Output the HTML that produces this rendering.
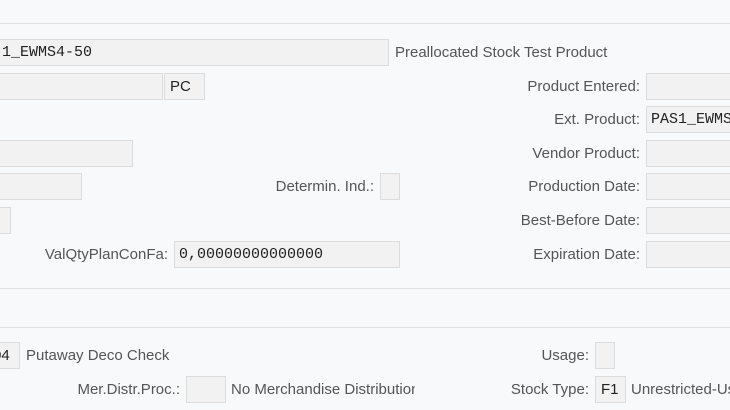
<!DOCTYPE html>
<html><head><meta charset="utf-8"><style>
html,body{margin:0;padding:0;}
body{width:730px;height:410px;overflow:hidden;background:#f8f9fa;position:relative;font-family:"Liberation Sans","DejaVu Sans",sans-serif;font-size:15px;color:#555;}
.f{position:absolute;background:#f2f2f2;border:1px solid #dcdcdc;box-sizing:border-box;height:27px;overflow:hidden;white-space:nowrap;}
.m{font-family:"Liberation Mono",monospace;color:#222;font-size:15px;line-height:26px;padding-left:4px;}
.v{color:#222;line-height:26px;padding-left:5px;font-size:15px;}
.l{position:absolute;white-space:nowrap;line-height:28px;text-align:right;}
.t{position:absolute;white-space:nowrap;line-height:28px;}
.hr{position:absolute;left:0;width:730px;height:1px;background:#e0e0e0;}
</style></head><body>
<div class="hr" style="top:23px"></div>
<div class="hr" style="top:288px"></div>
<div class="hr" style="top:327px"></div>

<div class="f m" style="left:-2px;top:39px;width:391px;padding-left:0"><span style="margin-left:-6px">-1_EWMS4-50</span></div>
<div class="t" style="left:395px;top:39px">Preallocated Stock Test Product</div>

<div class="f" style="left:-2px;top:73px;width:165px"></div>
<div class="f v" style="left:164px;top:73px;width:41px">PC</div>
<div class="l" style="right:90px;top:73px">Product Entered:</div>
<div class="f" style="left:646px;top:73px;width:90px"></div>

<div class="l" style="right:90px;top:106px">Ext. Product:</div>
<div class="f m" style="left:646px;top:106px;width:90px">PAS1_EWMS4</div>

<div class="f" style="left:-2px;top:140px;width:135px"></div>
<div class="l" style="right:90px;top:140px">Vendor Product:</div>
<div class="f" style="left:646px;top:140px;width:90px"></div>

<div class="f" style="left:-2px;top:173px;width:84px"></div>
<div class="l" style="right:356px;top:173px">Determin. Ind.:</div>
<div class="f" style="left:380px;top:173px;width:20px"></div>
<div class="l" style="right:90px;top:173px">Production Date:</div>
<div class="f" style="left:646px;top:173px;width:90px"></div>

<div class="f" style="left:-2px;top:207px;width:13px"></div>
<div class="l" style="right:90px;top:207px">Best-Before Date:</div>
<div class="f" style="left:646px;top:207px;width:90px"></div>

<div class="l" style="right:562px;top:241px">ValQtyPlanConFa:</div>
<div class="f m" style="left:174px;top:241px;width:226px">0,00000000000000</div>
<div class="l" style="right:90px;top:241px">Expiration Date:</div>
<div class="f" style="left:646px;top:241px;width:90px"></div>

<div class="f v" style="left:-2px;top:342px;width:22px;padding-left:0"><span style="margin-left:-6px">04</span></div>
<div class="t" style="left:26px;top:342px">Putaway Deco Check</div>
<div class="l" style="right:141px;top:342px">Usage:</div>
<div class="f" style="left:595px;top:342px;width:20px"></div>

<div class="l" style="right:550px;top:376px">Mer.Distr.Proc.:</div>
<div class="f" style="left:186px;top:376px;width:40px"></div>
<div class="t" style="left:231px;top:376px;width:184px;overflow:hidden">No Merchandise Distribution</div>
<div class="l" style="right:141px;top:376px">Stock Type:</div>
<div class="f v" style="left:595px;top:376px;width:31px">F1</div>
<div class="t" style="left:631px;top:376px">Unrestricted-Use</div>
</body></html>
